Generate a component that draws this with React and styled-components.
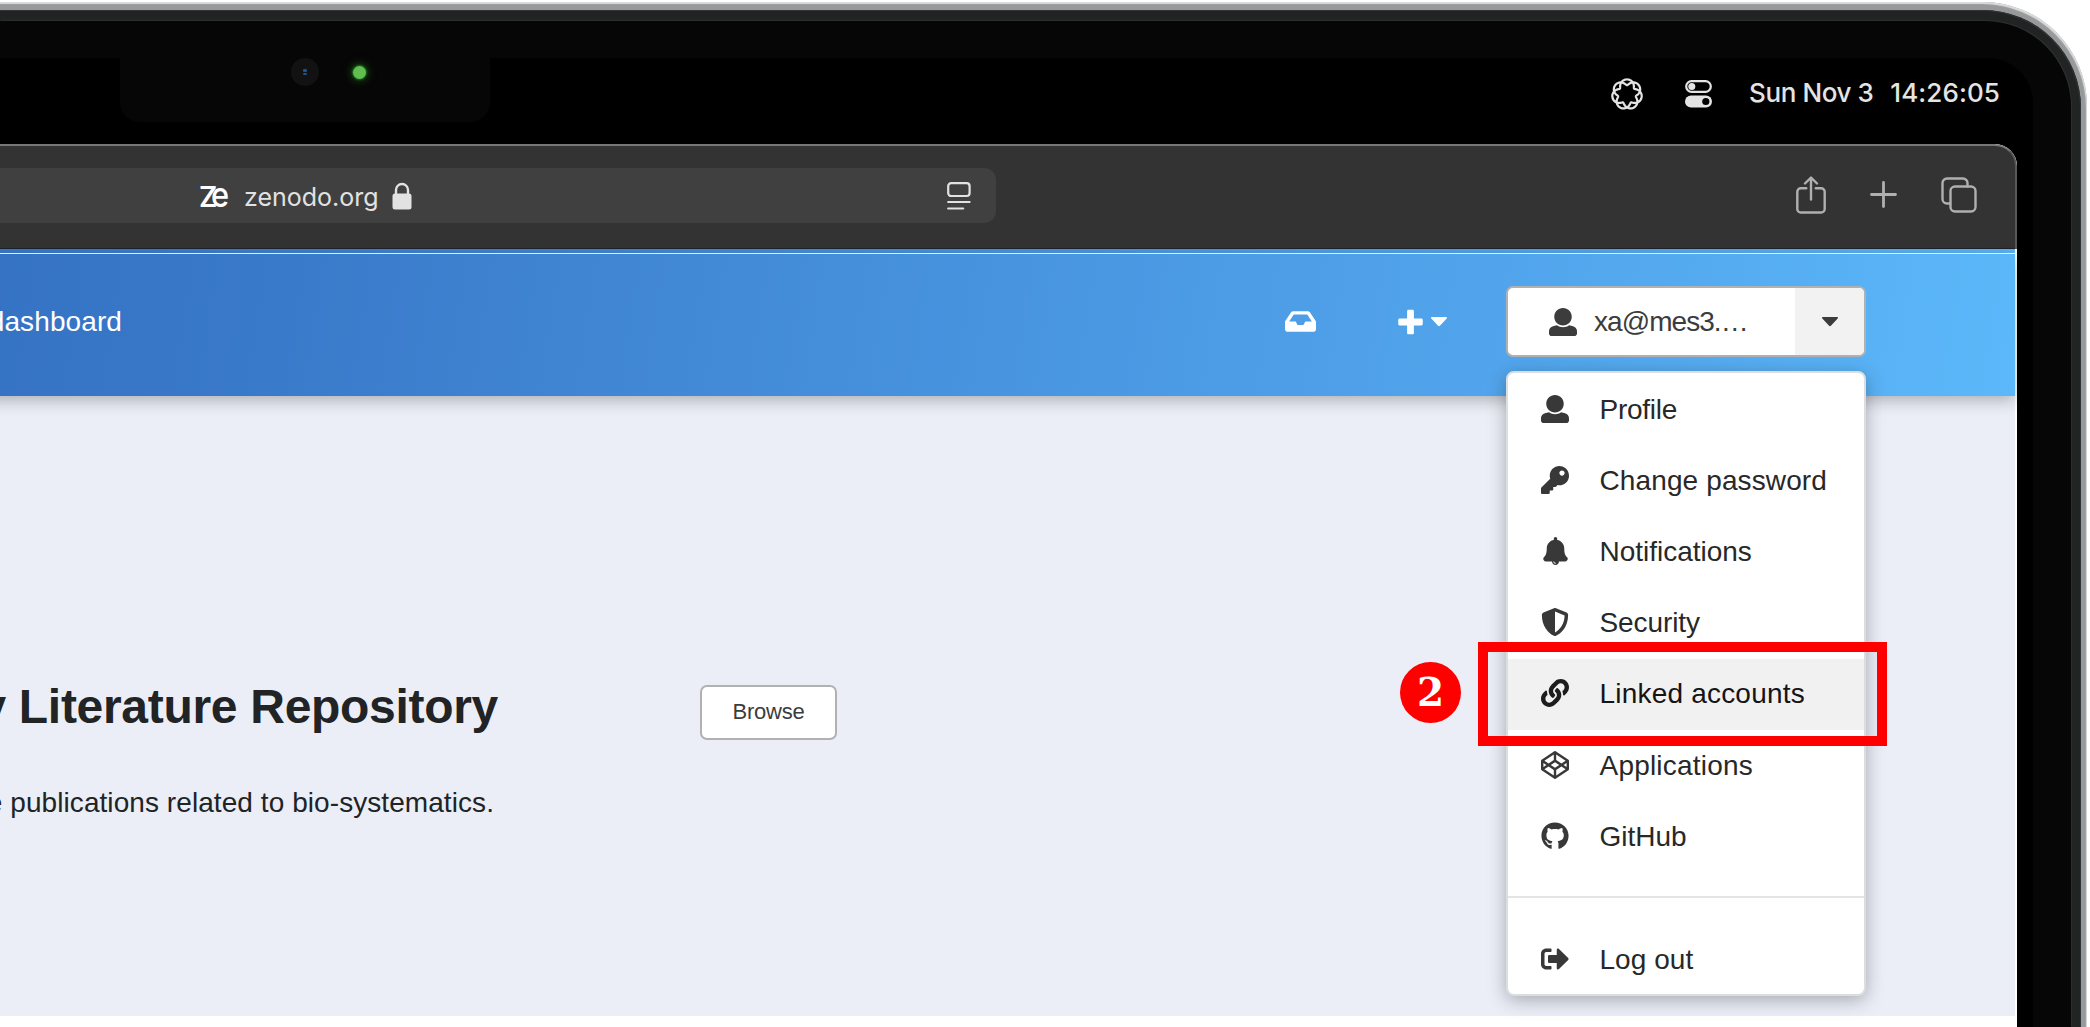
import React from "react";
import styled, { createGlobalStyle, css } from "styled-components";
import {
  FaKey,
  FaShieldAlt,
  FaLink,
  FaCodepen,
  FaGithub,
  FaSignOutAlt,
  FaInbox,
} from "react-icons/fa";

const GlobalStyle = createGlobalStyle`
  *, *::before, *::after { box-sizing: border-box; }
  html, body { margin: 0; background: #fff; overflow: hidden; }
  body { font-family: "Liberation Sans", Arial, sans-serif; }
  svg { display: block; flex: none; }
`;

/* ---------- Laptop ---------- */

const Shell = styled.div`
  width: 2087px;
  height: 1025px;
  margin-top: 2px;
  padding: 8px 6px 0 0;
  border-radius: 0 104px 0 0;
  overflow: hidden;
  background: #97999b;
  box-shadow: inset -1px 2px 1px #dcdddd;
`;

const Rim = styled.div`
  height: 100%;
  padding: 11px 10px 0 0;
  border-radius: 0 98px 0 0;
  background: #222323;
  box-shadow: inset -1px 1px 0 #303233;
`;

const Bezel = styled.div`
  height: 100%;
  padding: 37px 38px 0 0;
  border-radius: 0 86px 0 0;
  background: #060606;
  box-shadow: 1px -1px 0 #2c2e2e;
`;

const Screen = styled.div`
  position: relative;
  height: 100%;
  border-radius: 0 45px 0 0;
  background: #000;
  display: flex;
  flex-direction: column;
`;

const Notch = styled.div`
  position: absolute;
  left: 120px;
  top: -1px;
  width: 370px;
  height: 65px;
  border-radius: 0 0 20px 20px;
  background: #060606;
  display: flex;
  align-items: flex-start;
  padding: 1px 0 0 171px;
`;

const Lens = styled.div`
  width: 28px;
  height: 28px;
  border-radius: 50%;
  background: #121213;
  display: grid;
  place-content: center;
  gap: 1px;
  &::before, &::after {
    content: "";
    width: 4px;
    height: 2.5px;
    border-radius: 1px;
    background: #23508c;
  }
`;

const CameraLight = styled.div`
  width: 13px;
  height: 13px;
  margin: 7.5px 0 0 34px;
  border-radius: 50%;
  background: #62bd50;
  box-shadow: 0 0 2px 1px #1d6a1c, 0 0 8px 2px rgba(36, 110, 30, 0.6);
`;

const MenuBar = styled.div`
  height: 86px;
  padding: 0 33px 15px 0;
  display: flex;
  align-items: center;
  justify-content: flex-end;
  color: #e4e4e4;
`;

const StatusIcon = styled.span`
  margin-right: ${(p) => p.$gap}px;
`;

const Clock = styled.time`
  display: flex;
  justify-content: space-between;
  width: 251px;
  padding-bottom: 2px;
  font: 500 26px/32px Inter, "Liberation Sans", sans-serif;
  white-space: nowrap;
`;

const ClockPart = styled.span`
  letter-spacing: ${(p) => p.$track}px;
`;

/* ---------- Browser ---------- */

const Window = styled.div`
  width: 2017px;
  flex: 1;
  border-radius: 0 22px 0 0;
  overflow: hidden;
  background: #fff;
`;

const Toolbar = styled.div`
  height: 105px;
  padding: 22px 38px 0 0;
  border: solid #6d6d6d;
  border-width: 2px 2px 0 0;
  border-top-color: #777;
  border-right-color: #585858;
  border-radius: 0 22px 0 0;
  background: #333;
  display: flex;
  justify-content: space-between;
`;

const AddressBar = styled.div`
  width: 996px;
  height: 55px;
  padding: 0 25px 0 199px;
  border-radius: 0 12px 12px 0;
  background: #404040;
  display: flex;
  align-items: center;
  justify-content: space-between;
  color: #e2e2e2;
`;

const Address = styled.div`
  display: flex;
  align-items: center;
`;

const SiteLogo = styled.span`
  width: 45px;
  height: 34px;
  display: flex;
  align-items: baseline;
  color: #fff;
  font: 600 28px/34px Inter, sans-serif;
`;

const LogoE = styled.span`
  margin-left: -6px;
  font-size: 35px;
  font-weight: 500;
  line-height: 30px;
  transform: scaleX(0.88);
  transform-origin: left;
`;

const Domain = styled.span`
  width: 148px;
  padding-top: 2px;
  font: 400 25px/34px Inter, "Liberation Sans", sans-serif;
`;

const ToolbarActions = styled.div`
  display: flex;
  align-items: center;
  height: 55px;
  padding-bottom: 2px;
  color: #b0b0b0;
`;

const ToolbarIcon = styled.span`
  margin-left: ${(p) => p.$gap || 0}px;
`;

/* ---------- Page ---------- */

const TopStrip = styled.div`
  height: 4px;
  width: 2015px;
  background: linear-gradient(90deg, #3a79ca, #3f86d3 28%, #4c9be5 60%, #55abf0 85%, #5ab4f6);
  box-shadow: 0 -1px 0 #1b232b;
`;

const Hero = styled.div`
  width: 2017px;
  border-right: 2px solid #fff;
`;

const Header = styled.header`
  position: relative;
  height: 142px;
  margin: 1px 0 0 -20px;
  padding: 0 149px 7px 20px;
  background: linear-gradient(99deg, #3572c4, #3a7aca 15%, #3f84d1 28%, #4c9be5 60%, #55abf0 84%, #5cb8fa);
  box-shadow: 0 4px 15px rgba(34, 36, 38, 0.32);
  display: flex;
  align-items: center;
  color: #fff;
`;

const NavLink = styled.span`
  width: 122px;
  margin-right: auto;
  display: flex;
  justify-content: flex-end;
  font-size: 28px;
  line-height: 36px;
  letter-spacing: 0.1px;
`;

const IconLink = styled.span`
  display: flex;
  align-items: center;
  gap: 8px;
  margin-right: ${(p) => p.$gap}px;
`;

const buttonFrame = css`
  border: 2px solid #b1b1b1;
  border-radius: 7px;
  background: #fff;
  color: #3c3c3c;
`;

const UserButton = styled.div`
  ${buttonFrame}
  width: 360px;
  height: 71px;
  display: flex;
  overflow: hidden;
`;

const UserName = styled.div`
  flex: 1;
  padding-left: 41px;
  display: flex;
  align-items: center;
  gap: 17px;
  font-size: 28px;
  letter-spacing: -0.95px;
`;

const UserCaret = styled.div`
  width: 69px;
  background: #f2f2f2;
  display: grid;
  place-items: center;
`;

const Body = styled.main`
  height: 620px;
  background: #ebeef7;
  display: flex;
  align-items: flex-start;
  padding-top: 284px;
`;

const Community = styled.div`
  width: 700px;
`;

const ClippedLine = styled.div`
  display: flex;
  justify-content: flex-end;
  white-space: nowrap;
  color: #212324;
`;

const Title = styled(ClippedLine)`
  width: 498px;
  margin-bottom: 51px;
  font-size: 48px;
  line-height: 54px;
  font-weight: 700;
  letter-spacing: -0.3px;
`;

const Description = styled(ClippedLine)`
  width: 494px;
  font-size: 28px;
  line-height: 36px;
  letter-spacing: 0.07px;
`;

const BrowseButton = styled.button`
  ${buttonFrame}
  width: 137px;
  height: 55px;
  margin-top: 5px;
  padding: 0 0 1px;
  font: 22px "Liberation Sans", Arial, sans-serif;
  letter-spacing: -0.2px;
`;

/* ---------- Dropdown ---------- */

const Menu = styled.nav`
  position: absolute;
  left: 1506px;
  top: 313px;
  width: 360px;
  height: 625px;
  padding-top: 1px;
  border: 2px solid #dcdddf;
  border-radius: 8px;
  background: #fff;
  box-shadow: 0 4px 18px rgba(34, 36, 38, 0.34);
`;

const MenuItem = styled.div`
  height: 71.2px;
  padding: 0 0 0 32px;
  display: flex;
  align-items: center;
  gap: 29.5px;
  background: ${(p) => (p.$active ? "#f1f1f1" : "transparent")};
  color: ${(p) => (p.$active ? "#151515" : "#282828")};
  font-size: 28px;
  letter-spacing: ${(p) => p.$track || 0}px;
  white-space: nowrap;
`;

const ItemIcon = styled.span`
  width: 30px;
  height: 28px;
  margin-bottom: 2px;
  display: grid;
  place-items: center;
  color: ${(p) => (p.$active ? "#1d1d1d" : "#383838")};
`;

const Divider = styled.hr`
  height: 2px;
  margin: 24px 0 26px;
  border: 0;
  background: #e4e4e5;
`;

/* ---------- Annotation ---------- */

const Highlight = styled.div`
  position: absolute;
  left: 1478px;
  top: 584px;
  width: 409px;
  height: 104px;
  border: 10px solid #f00;
`;

const StepBadge = styled.div`
  position: absolute;
  left: 1400px;
  top: 604px;
  width: 61px;
  height: 61px;
  border-radius: 50%;
  background: #f00;
  color: #fff;
  font: 700 39px/61px "DejaVu Serif", serif;
  text-align: center;
`;

/* ---------- Drawings ---------- */

const UserIcon = () => (
  <svg width="28" height="28" viewBox="0 0 512 512" fill="currentColor">
    <path d="M256 0c88.366 0 160 71.634 160 160s-71.634 160-160 160S96 248.366 96 160 167.634 0 256 0zm183.283 333.821l-71.313-17.828c-74.923 53.89-165.738 41.864-223.94 0l-71.313 17.828C29.981 344.505 0 382.903 0 426.955V464c0 26.51 21.49 48 48 48h416c26.51 0 48-21.49 48-48v-37.045c0-44.052-29.981-82.45-72.717-93.134z" />
  </svg>
);

const BellIcon = () => (
  <svg width="25" height="28" viewBox="0 0 448 512" fill="currentColor">
    <path d="M433.884 366.059C411.634 343.809 384 316.118 384 208c0-79.394-57.831-145.269-133.663-157.83A31.845 31.845 0 0 0 256 32c0-17.673-14.327-32-32-32s-32 14.327-32 32c0 6.75 2.095 13.008 5.663 18.17C121.831 62.731 64 128.606 64 208c0 108.118-27.643 135.809-49.893 158.059C-16.042 396.208 5.325 448 48.048 448H160c0 35.346 28.654 64 64 64s64-28.654 64-64h111.943c42.638 0 64.151-51.731 33.941-81.941zM224 472a8 8 0 0 1 0 16c-22.056 0-40-17.944-40-40h16c0 13.234 10.766 24 24 24z" />
  </svg>
);

const PlusIcon = () => (
  <svg width="25" height="28" viewBox="0 0 448 512" fill="currentColor">
    <path d="M448 294.2v-76.4c0-13.3-10.7-24-24-24H286.2V56c0-13.3-10.7-24-24-24h-76.4c-13.3 0-24 10.7-24 24v137.8H24c-13.3 0-24 10.7-24 24v76.4c0 13.3 10.7 24 24 24h137.8V456c0 13.3 10.7 24 24 24h76.4c13.3 0 24-10.7 24-24V318.2H424c13.3 0 24-10.7 24-24z" />
  </svg>
);

const Caret = () => (
  <svg width="16" height="10" viewBox="0 0 16 10" fill="currentColor">
    <path d="M1 0h14c.9 0 1.3 1 .7 1.6l-6.8 7.2c-.5.5-1.3.5-1.8 0L.3 1.6C-.3 1 .1 0 1 0z" />
  </svg>
);

/* Two interlaced turns around the centre form a chain of seven ovals. */
const rosette = Array.from({ length: 281 }, (_, i) => {
  const t = (i / 280) * Math.PI * 4;
  const r = 12 + 2.9 * Math.cos(3.5 * t);
  const a = t + 0.13 * Math.sin(3.5 * t);
  return `${i ? "L" : "M"}${(16 + r * Math.sin(a)).toFixed(2)} ${(16.3 - r * Math.cos(a)).toFixed(2)}`;
}).join("");

const RosetteIcon = () => (
  <svg width="32" height="32" viewBox="0 0 32 32" fill="none" stroke="currentColor" strokeWidth="2.2">
    <path d={rosette} />
  </svg>
);

const ControlCenterIcon = () => (
  <svg width="27" height="28" viewBox="0 0 27 28">
    <rect x="1.2" y="1.2" width="24.6" height="10.6" rx="5.3" fill="none" stroke="currentColor" strokeWidth="2.2" />
    <circle cx="6.8" cy="6.5" r="3.5" fill="currentColor" />
    <rect x="0" y="15.5" width="27" height="12" rx="6" fill="currentColor" />
    <circle cx="20.8" cy="21.5" r="3.6" fill="#000" />
  </svg>
);

const LockIcon = () => (
  <svg width="20" height="28" viewBox="0 0 20 28">
    <path d="M4 13V8a6 6 0 0 1 12 0v5" fill="none" stroke="currentColor" strokeWidth="2.4" />
    <rect x="0.5" y="11.5" width="19" height="16" rx="2.5" fill="currentColor" />
  </svg>
);

const ReaderIcon = () => (
  <svg width="24" height="28" viewBox="0 0 24 28" fill="none" stroke="currentColor" strokeWidth="2.2" strokeLinecap="round">
    <rect x="1.2" y="1.2" width="21.4" height="12.8" rx="3" />
    <path d="M1.2 20h21.4M1.2 26.500h15" />
  </svg>
);

const ShareIcon = () => (
  <svg width="30" height="38" viewBox="0 0 30 38" fill="none" stroke="currentColor" strokeWidth="2.4" strokeLinecap="round" strokeLinejoin="round">
    <path d="M10.3 12.3H4.8a3.5 3.5 0 0 0-3.5 3.5V33a3.5 3.5 0 0 0 3.5 3.5h20.4a3.5 3.5 0 0 0 3.5-3.5V15.8a3.5 3.5 0 0 0-3.5-3.5h-5.5" />
    <path d="M15 23.5V2M9 7.5l6-6 6 6" />
  </svg>
);

const NewTabIcon = () => (
  <svg width="27" height="27" viewBox="0 0 27 27" fill="none" stroke="currentColor" strokeWidth="2.8" strokeLinecap="round">
    <path d="M13.5 1.5v24M1.5 13.5h24" />
  </svg>
);

const TabsIcon = () => (
  <svg width="36" height="36" viewBox="0 0 36 36" fill="none" stroke="currentColor" strokeWidth="2.4" strokeLinecap="round">
    <rect x="9.5" y="9.5" width="25" height="25" rx="4.5" />
    <path d="M26.5 9.3V6a4.5 4.5 0 0 0-4.5-4.5H6A4.5 4.5 0 0 0 1.5 6v16A4.5 4.5 0 0 0 6 26.5h3.2" />
  </svg>
);

const items = [
  { label: "Profile", icon: <UserIcon />, track: -0.25 },
  { label: "Change password", icon: <FaKey size={28} />, track: 0.12 },
  { label: "Notifications", icon: <BellIcon />, track: -0.02 },
  { label: "Security", icon: <FaShieldAlt size={28} />, track: -0.1 },
  { label: "Linked accounts", icon: <FaLink size={28} />, track: 0.2, active: true },
  { label: "Applications", icon: <FaCodepen size={28} />, track: 0.2 },
  { label: "GitHub", icon: <FaGithub size={28} />, track: 0 },
];

const Entry = ({ label, icon, track, active }) => (
  <MenuItem $track={track} $active={active}>
    <ItemIcon $active={active}>{icon}</ItemIcon>
    {label}
  </MenuItem>
);

export default function App() {
  return (
    <>
      <GlobalStyle />
      <Shell>
        <Rim>
          <Bezel>
            <Screen>
              <MenuBar>
                <StatusIcon $gap={42}><RosetteIcon /></StatusIcon>
                <StatusIcon $gap={37}><ControlCenterIcon /></StatusIcon>
                <Clock>
                  <ClockPart $track={-0.4}>Sun Nov 3</ClockPart>
                  <ClockPart $track={0.1}>14:26:05</ClockPart>
                </Clock>
              </MenuBar>
              <Notch>
                <Lens />
                <CameraLight />
              </Notch>
              <Window>
                <Toolbar>
                  <AddressBar>
                    <Address>
                      <SiteLogo>Z<LogoE>e</LogoE></SiteLogo>
                      <Domain>zenodo.org</Domain>
                      <LockIcon />
                    </Address>
                    <ReaderIcon />
                  </AddressBar>
                  <ToolbarActions>
                    <ToolbarIcon><ShareIcon /></ToolbarIcon>
                    <ToolbarIcon $gap={44}><NewTabIcon /></ToolbarIcon>
                    <ToolbarIcon $gap={44}><TabsIcon /></ToolbarIcon>
                  </ToolbarActions>
                </Toolbar>
                <TopStrip />
                <Hero>
                  <Header>
                    <NavLink>dashboard</NavLink>
                    <IconLink $gap={82}><FaInbox size={31} /></IconLink>
                    <IconLink $gap={59}><PlusIcon /><Caret /></IconLink>
                    <UserButton>
                      <UserName><UserIcon />xa@mes3.…</UserName>
                      <UserCaret><Caret /></UserCaret>
                    </UserButton>
                  </Header>
                  <Body>
                    <Community>
                      <Title>y Literature Repository</Title>
                      <Description>e publications related to bio-systematics.</Description>
                    </Community>
                    <BrowseButton>Browse</BrowseButton>
                  </Body>
                </Hero>
              </Window>
              <Menu>
                {items.map((item) => <Entry key={item.label} {...item} />)}
                <Divider />
                <Entry label="Log out" icon={<FaSignOutAlt size={28} />} track={0.05} />
              </Menu>
              <Highlight />
              <StepBadge>2</StepBadge>
            </Screen>
          </Bezel>
        </Rim>
      </Shell>
    </>
  );
}
